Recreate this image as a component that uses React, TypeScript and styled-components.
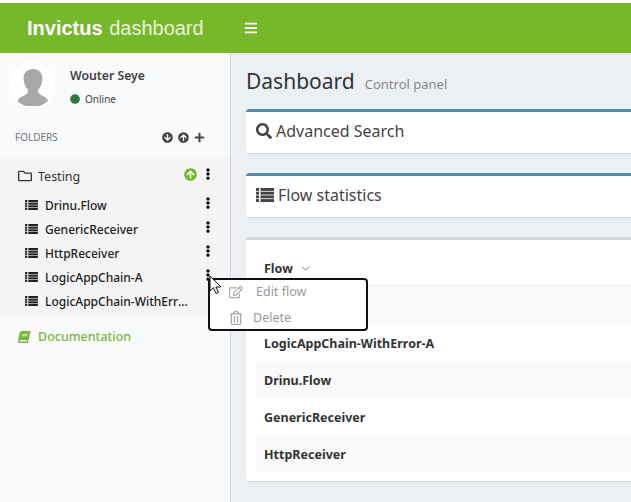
import React from 'react';
import styled, { createGlobalStyle } from 'styled-components';
import {
  FaArrowCircleDown,
  FaArrowCircleUp,
  FaBars,
  FaBook,
  FaCircle,
  FaEllipsisV,
  FaPlus,
  FaRegEdit,
  FaRegFolder,
  FaRegTrashAlt,
  FaSearch,
} from 'react-icons/fa';
import { FiChevronDown } from 'react-icons/fi';

const FONT = '"Noto Sans", "Open Sans", Arial, sans-serif';

const GlobalStyle = createGlobalStyle`
  html, body {
    margin: 0;
    width: 631px;
    height: 502px;
    overflow: hidden;
    background: #fff;
    font-family: ${FONT};
    color: #333;
  }
`;

const Page = styled.div`
  position: relative;
  width: 631px;
  height: 502px;
  padding-top: 3px;
  box-sizing: border-box;
  display: flex;
  flex-direction: column;
  overflow: hidden;
`;

const Header = styled.header`
  flex: 0 0 50px;
  display: flex;
  align-items: center;
  background: #76b82a;
  color: #fff;
`;

const Brand = styled.div`
  width: 230px;
  padding-left: 27px;
  box-sizing: border-box;
  font-family: "Liberation Sans", Arial, sans-serif;
  font-size: 20px;
  word-spacing: 1px;
  color: #e6f3d6;
  b {
    color: #fff;
  }
`;

const MenuToggle = styled.div`
  margin-left: 14px;
  display: flex;
  font-size: 14px;
`;

const Body = styled.div`
  flex: 1;
  display: flex;
  min-height: 0;
`;

const Sidebar = styled.aside`
  width: 231px;
  flex: none;
  box-sizing: border-box;
  background: #f9fafc;
  border-right: 1px solid #d2d6de;
`;

const UserPanel = styled.div`
  display: flex;
  padding: 9px 0 0 10px;
  height: 55px;
`;

const Avatar = styled.div`
  width: 45px;
  height: 45px;
  border-radius: 50%;
  background: #fff;
  overflow: hidden;
  display: flex;
  align-items: flex-end;
  justify-content: center;
  svg {
    margin-bottom: 1px;
  }
`;

const UserInfo = styled.div`
  margin-left: 15px;
  padding-top: 4px;
`;

const UserName = styled.div`
  font-size: 12.25px;
  font-weight: 600;
  line-height: 20px;
  color: #444;
`;

const UserStatus = styled.div`
  display: flex;
  align-items: center;
  gap: 5px;
  margin-top: 6px;
  font-size: 10px;
  color: #444;
  svg {
    color: #2f7a43;
    font-size: 10px;
  }
`;

const FoldersHeader = styled.div`
  height: 40px;
  padding: 0 25px 0 15px;
  display: flex;
  align-items: center;
  justify-content: space-between;
  font-size: 10px;
  color: #777;
`;

const FolderActions = styled.div`
  display: flex;
  gap: 5px;
  font-size: 11px;
  color: #444;
`;

const FolderPanel = styled.div`
  background: #f4f4f5;
  padding: 7px 0 3px;
`;

const FolderRow = styled.div`
  height: 24px;
  padding: 0 16px 0 18px;
  display: flex;
  align-items: center;
  font-size: 12.5px;
  color: #333;
  margin-bottom: 5px;
  > svg:first-child {
    font-size: 14px;
    margin-right: 6px;
  }
`;

const RowLabel = styled.span`
  flex: 1;
  min-width: 0;
  white-space: nowrap;
  overflow: hidden;
  text-overflow: ellipsis;
`;

const FlowLabel = styled(RowLabel)`
  margin-right: 7px;
`;

const UploadIcon = styled(FaArrowCircleUp)`
  color: #76b82a;
  font-size: 13px;
  margin-right: 5px;
  transform: translateY(-2px);
`;

const KebabIcon = styled(FaEllipsisV)<{ $hidden?: boolean }>`
  color: #111;
  font-size: 12px;
  flex: none;
  transform: translateY(-2px);
  visibility: ${(p) => (p.$hidden ? 'hidden' : 'visible')};
`;

const FlowRow = styled.div`
  height: 24px;
  padding: 0 16px 0 25px;
  display: flex;
  align-items: center;
  gap: 7px;
  font-size: 12px;
  font-weight: 500;
  color: #222;
`;

const DocLink = styled.div`
  margin-top: 11px;
  line-height: 20px;
  padding-left: 18px;
  display: flex;
  align-items: center;
  gap: 8px;
  font-size: 12.5px;
  font-weight: 500;
  color: #7ab63a;
  svg {
    font-size: 12px;
    transform: skewX(-12deg);
  }
`;

const Main = styled.main`
  flex: 1;
  min-width: 0;
  background: #ecf0f5;
  padding: 0 0 0 15px;
  overflow: hidden;
`;

const TitleRow = styled.div`
  display: flex;
  align-items: baseline;
  height: 56px;
  padding-top: 11px;
  box-sizing: border-box;
`;

const Title = styled.h1`
  margin: 0;
  font-size: 21px;
  font-weight: 400;
  line-height: 35px;
  color: #333;
`;

const Subtitle = styled.small`
  margin-left: 10px;
  font-size: 13px;
  color: #888;
`;

const Box = styled.section<{ $accent: string }>`
  width: 420px;
  box-sizing: border-box;
  background: #fff;
  border-top: 3px solid ${(p) => p.$accent};
  border-radius: 3px 0 0 3px;
  box-shadow: 0 1px 1px rgba(0, 0, 0, 0.1);
  margin-bottom: 20px;
`;

const BoxHeader = styled.div`
  height: 37px;
  padding: 0 0 4px 10px;
  display: flex;
  align-items: center;
  gap: 4px;
  font-size: 16px;
  color: #444;
  svg {
    font-size: 16px;
    flex: none;
  }
`;

const TableBody = styled.div`
  padding: 11px 0 9px 10px;
`;

const TableHead = styled.div`
  height: 34px;
  padding-left: 8px;
  display: flex;
  align-items: center;
  gap: 6px;
  border-bottom: 2px solid #f4f4f4;
  font-size: 12.5px;
  font-weight: 700;
  color: #333;
  svg {
    font-size: 13px;
    stroke-width: 1.5;
    color: #555;
  }
`;

const TableRow = styled.div<{ $striped: boolean }>`
  height: 37px;
  box-sizing: border-box;
  padding: 2px 0 0 8px;
  display: flex;
  align-items: center;
  font-size: 12.5px;
  font-weight: 700;
  color: #333;
  background: ${(p) => (p.$striped ? '#f9f9f9' : '#fff')};
`;

const ContextMenu = styled.div`
  position: absolute;
  left: 208px;
  top: 278px;
  width: 160px;
  height: 53px;
  box-sizing: border-box;
  background: #fff;
  border: 2px solid #111;
  border-radius: 4px;
  display: flex;
  flex-direction: column;
  gap: 3px;
`;

const MenuItem = styled.div<{ $indent: number }>`
  height: 23px;
  padding-left: 19px;
  display: flex;
  align-items: center;
  font-size: 12.5px;
  color: #999;
  svg {
    font-size: 14px;
    color: #aaa;
    margin-right: ${(p) => p.$indent}px;
  }
`;

const Cursor = styled.svg`
  position: absolute;
  left: 209px;
  top: 275px;
`;

// FontAwesome 4 style list: square bullets against tightly stacked bars
function ListIcon({ width, height }: { width: number; height: number }) {
  const rows = [0, 1, 2, 3];
  return (
    <svg width={width} height={height} viewBox="0 0 18 14" fill="currentColor" style={{ flex: 'none' }}>
      {rows.map((r) => (
        <g key={r}>
          <rect x="0" y={r * 3.7} width="3" height="2.900" />
          <rect x="4.500" y={r * 3.7} width="13.500" height="2.900" />
        </g>
      ))}
    </svg>
  );
}

const flows = ['Drinu.Flow', 'GenericReceiver', 'HttpReceiver', 'LogicAppChain-A', 'LogicAppChain-WithError-A'];
// first row sits behind the context menu, nothing of it shows
const tableRows = ['', 'LogicAppChain-WithError-A', 'Drinu.Flow', 'GenericReceiver', 'HttpReceiver'];

export default function App() {
  return (
    <Page>
      <GlobalStyle />
      <Header>
        <Brand>
          <b>Invictus</b> dashboard
        </Brand>
        <MenuToggle>
          <FaBars />
        </MenuToggle>
      </Header>
      <Body>
        <Sidebar>
          <UserPanel>
            <Avatar>
              <svg width="34" height="38" viewBox="0 0 36 40">
                <path
                  fill="#a8a8a8"
                  d="M18 1c6 0 10 4 10 10 0 5-2 9-4.500 12-.6 2 0 4 3 5.500 4 2 8 3.500 9 11.500H0c1-8 5-9.500 9.500-11.500 3-1.500 3.600-3.500 3-5.500C10 20 8 16 8 11 8 5 12 1 18 1z"
                />
              </svg>
            </Avatar>
            <UserInfo>
              <UserName>Wouter Seye</UserName>
              <UserStatus>
                <FaCircle />
                Online
              </UserStatus>
            </UserInfo>
          </UserPanel>
          <FoldersHeader>
            FOLDERS
            <FolderActions>
              <FaArrowCircleDown />
              <FaArrowCircleUp />
              <FaPlus />
            </FolderActions>
          </FoldersHeader>
          <FolderPanel>
            <FolderRow>
              <FaRegFolder />
              <RowLabel>Testing</RowLabel>
              <UploadIcon />
              <KebabIcon />
            </FolderRow>
            {flows.map((flow, i) => (
              <FlowRow key={flow}>
                <ListIcon width={13} height={10} />
                <FlowLabel>{flow}</FlowLabel>
                <KebabIcon $hidden={i === flows.length - 1} />
              </FlowRow>
            ))}
          </FolderPanel>
          <DocLink>
            <FaBook />
            Documentation
          </DocLink>
        </Sidebar>
        <Main>
          <TitleRow>
            <Title>Dashboard</Title>
            <Subtitle>Control panel</Subtitle>
          </TitleRow>
          <Box $accent="#4a8cb5">
            <BoxHeader>
              <FaSearch />
              Advanced Search
            </BoxHeader>
          </Box>
          <Box $accent="#4a8cb5">
            <BoxHeader>
              <ListIcon width={18} height={14} />
              Flow statistics
            </BoxHeader>
          </Box>
          <Box $accent="#d2d6de">
            <TableBody>
              <TableHead>
                Flow
                <FiChevronDown />
              </TableHead>
              {tableRows.map((row, i) => (
                <TableRow key={i} $striped={i % 2 === 0}>
                  {row}
                </TableRow>
              ))}
            </TableBody>
          </Box>
        </Main>
      </Body>
      <ContextMenu>
        <MenuItem $indent={13}>
          <FaRegEdit />
          Edit flow
        </MenuItem>
        <MenuItem $indent={10}>
          <FaRegTrashAlt />
          Delete
        </MenuItem>
      </ContextMenu>
      <Cursor width="13" height="20" viewBox="0 0 13 20">
        <path d="M1 1v15l3.500-3.200L7 18.500l2.500-1L7 12h5z" fill="#fff" stroke="#111" strokeWidth="1" />
      </Cursor>
    </Page>
  );
}
